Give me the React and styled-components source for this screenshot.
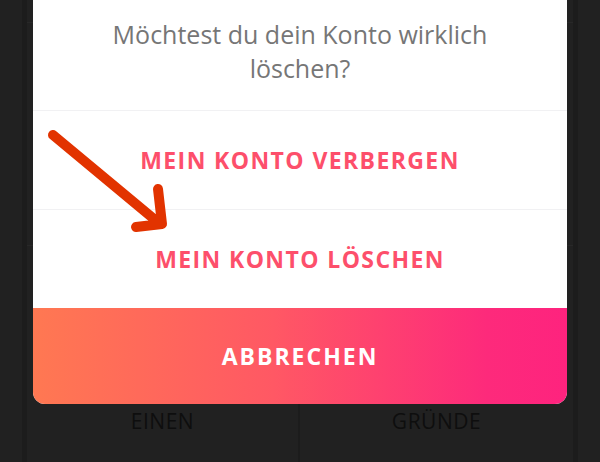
import React from 'react';
import styled, { createGlobalStyle } from 'styled-components';

const GlobalStyle = createGlobalStyle`
  html, body {
    margin: 0;
    padding: 0;
    background: #212121;
  }
  body {
    font-family: "Open Sans", Lato, sans-serif;
  }
`;

export default function App() {
  return (
    <>
      <GlobalStyle />
      <Screen>
        <Panel>
          <PanelRow $height={22} />
          <PanelRow $height={222} />
          <ReasonRow>
            <ReasonCell>EINEN</ReasonCell>
            <ReasonCell>GRÜNDE</ReasonCell>
          </ReasonRow>
        </Panel>

        <Dialog>
          <Question>
            Möchtest du dein Konto wirklich
            <br />
            löschen?
          </Question>
          <Option>MEIN KONTO VERBERGEN</Option>
          <Option>MEIN KONTO LÖSCHEN</Option>
          <CancelButton>ABBRECHEN</CancelButton>
        </Dialog>

        <Arrow viewBox="0 0 600 462">
          <path
            d="M53 135 L160 224 M158 189 L162 224 L136 227"
            fill="none"
            stroke="#e23300"
            strokeWidth="10"
            strokeLinecap="round"
            strokeLinejoin="round"
          />
        </Arrow>
      </Screen>
    </>
  );
}

const Screen = styled.div`
  position: relative;
  width: 600px;
  height: 462px;
  overflow: hidden;
  background: #212121;
`;

const Panel = styled.div`
  margin: 0 22px;
  height: 100%;
  display: flex;
  flex-direction: column;
  border-left: 5px solid #1c1c1c;
  border-right: 5px solid #1c1c1c;
`;

const PanelRow = styled.div`
  height: ${(p) => p.$height}px;
  border-bottom: 1px solid #282828;
`;

const ReasonRow = styled.div`
  flex: 1;
  display: grid;
  grid-template-columns: 1fr 1fr;
`;

const ReasonCell = styled.div`
  display: flex;
  align-items: flex-end;
  justify-content: center;
  padding-bottom: 27px;
  font-size: 21px;
  letter-spacing: 0.5px;
  color: #0e0e0e;
  &:first-child {
    border-right: 2px solid #1c1c1c;
  }
`;

const Dialog = styled.div`
  position: absolute;
  top: 0;
  left: 33px;
  width: 534px;
  background: #fff;
  border-radius: 0 0 12px 12px;
  overflow: hidden;
  display: flex;
  flex-direction: column;
`;

const Question = styled.div`
  padding: 17px 30px 25px;
  text-align: center;
  font-size: 25px;
  line-height: 34px;
  color: #767676;
`;

const Option = styled.div`
  height: 98px;
  border-top: 1px solid #f1f1f3;
  display: flex;
  align-items: center;
  justify-content: center;
  font-size: 23px;
  font-weight: 700;
  letter-spacing: 1.4px;
  color: #fd4f6b;
`;

const CancelButton = styled.div`
  height: 96px;
  display: flex;
  align-items: center;
  justify-content: center;
  font-size: 23px;
  font-weight: 700;
  letter-spacing: 2px;
  color: #fff;
  background: linear-gradient(90deg, #ff7852 0%, #ff5864 45%, #fd2a7b 85%, #fe237e 100%);
`;

const Arrow = styled.svg`
  position: absolute;
  inset: 0;
  width: 600px;
  height: 462px;
  pointer-events: none;
`;
